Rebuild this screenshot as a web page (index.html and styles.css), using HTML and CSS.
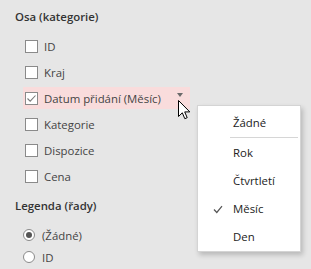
FILE: index.html
```html
<!DOCTYPE html>
<html lang="cs">
<head>
    <meta charset="UTF-8">
    <title>Pole grafu</title>
    <link rel="stylesheet" href="styles.css">
</head>
<body>
    <div class="panel">
        <h2 class="section-title">Osa (kategorie)</h2>
        <ul class="fields">
            <li class="field"><span class="box"></span>ID</li>
            <li class="field"><span class="box"></span>Kraj</li>
            <li class="field field-hover">
                <span class="box checked">
                    <svg width="11" height="11" viewBox="0 0 11 11"><path d="M1.5 5.5 L4.2 8.2 L9.5 2.5" fill="none" stroke="#7a7a7a" stroke-width="1.1"/></svg>
                </span>Datum přidání (Měsíc)
                <span class="drop-arrow"></span>
            </li>
            <li class="field"><span class="box"></span>Kategorie</li>
            <li class="field"><span class="box"></span>Dispozice</li>
            <li class="field"><span class="box"></span>Cena</li>
        </ul>

        <h2 class="section-title legend-title">Legenda (řady)</h2>
        <ul class="radios">
            <li class="radio-row"><span class="radio selected"></span>(Žádné)</li>
            <li class="radio-row"><span class="radio"></span>ID</li>
        </ul>
    </div>

    <ul class="menu">
        <li class="menu-item">Žádné</li>
        <li class="menu-sep"></li>
        <li class="menu-item">Rok</li>
        <li class="menu-item">Čtvrtletí</li>
        <li class="menu-item active">
            <svg class="tick" width="10" height="9" viewBox="0 0 10 9"><path d="M1 4.5 L3.8 7.5 L9 1.2" fill="none" stroke="#555" stroke-width="1.2"/></svg>
            Měsíc
        </li>
        <li class="menu-item">Den</li>
    </ul>

    <svg class="cursor" width="13" height="20" viewBox="0 0 13 20">
        <path d="M0.5 0.5 L0.5 16.5 L4.3 12.8 L6.8 18.7 L9.2 17.7 L6.7 11.9 L11.8 11.9 Z" fill="#fff" stroke="#000" stroke-width="1" stroke-linejoin="miter"/>
    </svg>
</body>
</html>
```

FILE: styles.css
```css
body {
    margin: 0;
    background-color: #e6e6e6;
    font-family: "Open Sans", "Noto Sans", sans-serif;
    font-size: 11.4px;
    color: #444;
    width: 311px;
    height: 269px;
    overflow: hidden;
    position: relative;
}

ul {
    list-style: none;
    margin: 0;
    padding: 0;
}

.panel {
    padding: 8px 0 0 15px;
}

.section-title {
    margin: 0;
    height: 18px;
    line-height: 18px;
    font-size: 11.4px;
    font-weight: 600;
    color: #333;
}

.fields {
    margin-top: 7px;
}

.field {
    display: flex;
    align-items: center;
    height: 26px;
    padding-left: 10px;
    position: relative;
}

.field-hover {
    margin-left: 8px;
    padding-left: 2px;
    width: 165px;
    height: 22px;
    margin-top: 2px;
    margin-bottom: 2px;
    background-color: #f9dcdc;
}

.box {
    width: 11px;
    height: 11px;
    border: 1px solid #8a8a8a;
    background-color: #fff;
    margin-right: 6px;
    display: flex;
    align-items: center;
    justify-content: center;
    flex-shrink: 0;
}

.drop-arrow {
    position: absolute;
    left: 154px;
    top: 6px;
    width: 0;
    height: 0;
    border-left: 3.5px solid transparent;
    border-right: 3.5px solid transparent;
    border-top: 4px solid #6a6a6a;
}

.legend-title {
    margin-top: 8px;
}

.radios {
    margin-top: 9px;
}

.radio-row {
    display: flex;
    align-items: center;
    height: 22px;
    padding-left: 8px;
}

.radio {
    width: 10px;
    height: 10px;
    border: 1px solid #8a8a8a;
    border-radius: 50%;
    background-color: #fff;
    margin-right: 7px;
    display: flex;
    align-items: center;
    justify-content: center;
}

.radio.selected::after {
    content: "";
    width: 6px;
    height: 6px;
    border-radius: 50%;
    background-color: #555;
}

.menu {
    position: absolute;
    left: 197px;
    top: 105px;
    width: 104px;
    padding-top: 3px;
    background-color: #fff;
    border: 1px solid #d4d4d4;
    box-sizing: border-box;
    box-shadow: 2px 3px 5px rgba(0, 0, 0, 0.2);
    color: #222;
}

.menu-item {
    height: 28px;
    line-height: 28px;
    padding-left: 35px;
    position: relative;
}

.menu-sep {
    height: 1px;
    margin: 0 2px 1px 32px;
    background-color: #d6d6d6;
}

.tick {
    position: absolute;
    left: 15px;
    top: 10px;
}

.cursor {
    position: absolute;
    left: 178px;
    top: 100px;
}
```
